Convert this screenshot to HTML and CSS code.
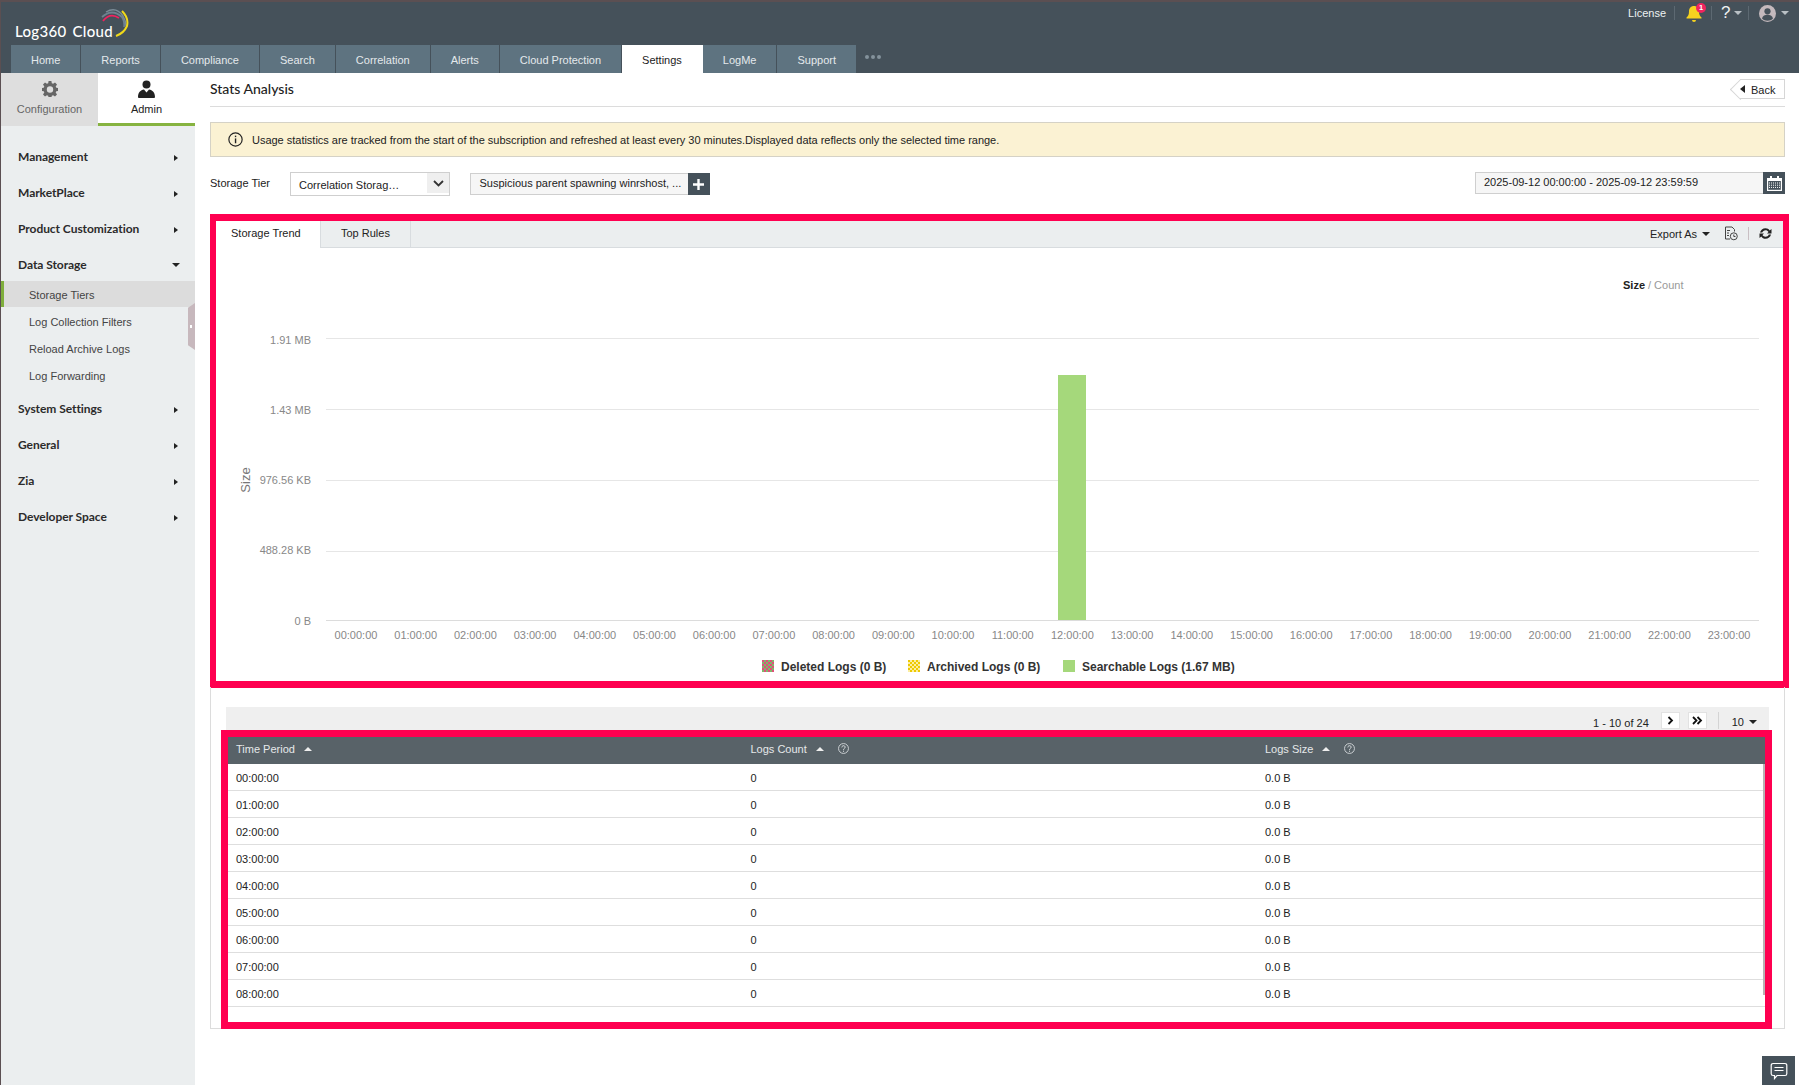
FILE: index.html
```html
<!DOCTYPE html>
<html lang="en">
<head>
<meta charset="utf-8">
<title>Stats Analysis</title>
<link rel="stylesheet" href="styles.css">
</head>
<body>
<header class="top">
  <div class="brand-row">
    <div class="brand">
      <span class="brand-name">Log360 Cloud</span>
      <svg class="brand-arc" width="32" height="32" viewBox="98 6 32 32" fill="none">
        <path d="M103 21 Q110 12 119 18" stroke="#f0225f" stroke-width="1.8"/>
        <path d="M102 17 Q112 8 122 17 Q125 22 124 27" stroke="#6f8290" stroke-width="1.8"/>
        <path d="M106 12 Q116 6 123 16 Q126 21 126 26" stroke="#7c8c97" stroke-width="1.4"/>
        <path d="M122 11 Q129 18 127 26 Q124 33 116 36" stroke="#f1d91a" stroke-width="2"/>
      </svg>
    </div>
    <div class="util">
      <a class="util-link">License</a>
      <i class="util-sep util-sep-a"></i>
      <span class="bell">
        <svg width="16" height="17" viewBox="0 0 16 17"><path d="M8 1c3 0 5 2.200 5 5.500 0 3.500 1 4.500 2.500 6v1H.5v-1C2 11 3 10 3 6.500 3 3.200 5 1 8 1z" fill="#f6d21f"/><path d="M6 15h4a2 2 0 0 1-4 0z" fill="#f6d21f"/></svg>
        <b class="badge">1</b>
      </span>
      <i class="util-sep"></i>
      <span class="help">?</span><i class="caret caret-util"></i>
      <i class="util-sep util-sep-b"></i>
      <svg class="avatar" width="17" height="17" viewBox="0 0 17 17"><circle cx="8.500" cy="8.500" r="8.500" fill="#c4b9bd"/><circle cx="8.500" cy="6.300" r="3.100" fill="#45515a"/><path d="M3 13.500c.6-2.800 3-3.700 5.500-3.700s4.900.9 5.500 3.700c-1.400 1.500-3.300 2.200-5.500 2.200S4.400 15 3 13.500z" fill="#45515a"/></svg>
      <i class="caret caret-util caret-last"></i>
    </div>
  </div>
  <nav class="tabs">
    <a class="tab">Home</a><a class="tab">Reports</a><a class="tab">Compliance</a><a class="tab">Search</a><a class="tab">Correlation</a><a class="tab">Alerts</a><a class="tab">Cloud Protection</a><a class="tab tab-on">Settings</a><a class="tab">LogMe</a><a class="tab">Support</a>
    <span class="more"><i></i><i></i><i></i></span>
  </nav>
</header>

<div class="shell">
  <aside class="side">
    <div class="side-tabs">
      <div class="side-tab">
        <svg width="16" height="16" viewBox="0 0 16 16"><path fill="#666" fill-rule="evenodd" d="M6.600 0h2.800l.4 2.200 1.300.6L13 1.500l2 2-1.300 1.900.6 1.300 2.200.4v2.800l-2.200.4-.6 1.300 1.300 1.900-2 2-1.900-1.300-1.300.6-.4 2.200H6.600l-.4-2.200-1.300-.6L3 15.500l-2-2 1.300-1.900-.6-1.300L-.5 9.900V7.100l2.200-.4.600-1.300L1 3.500l2-2 1.900 1.300 1.300-.6zM8 5.300a3.200 3.200 0 1 0 0 6.400 3.200 3.200 0 0 0 0-6.400z"/></svg>
        <span>Configuration</span>
      </div>
      <div class="side-tab side-tab-on">
        <svg width="17" height="18" viewBox="0 0 17 18"><circle cx="8.500" cy="4.500" r="4" fill="#222"/><path d="M0 17c0-4.500 2.500-7 6-7.500l2.500 3 2.500-3c3.500.5 6 3 6 7.500 0 .5-.5 1-1 1H1c-.5 0-1-.5-1-1z" fill="#222"/></svg>
        <span>Admin</span>
      </div>
    </div>
    <ul class="menu">
      <li class="menu-item">Management<i class="arr"></i></li>
      <li class="menu-item">MarketPlace<i class="arr"></i></li>
      <li class="menu-item">Product Customization<i class="arr"></i></li>
      <li class="menu-item">Data Storage<i class="arr-down"></i></li>
      <li class="sub">
        <a class="sub-item sub-on">Storage Tiers</a>
        <a class="sub-item">Log Collection Filters</a>
        <a class="sub-item">Reload Archive Logs</a>
        <a class="sub-item">Log Forwarding</a>
      </li>
      <li class="menu-item">System Settings<i class="arr"></i></li>
      <li class="menu-item">General<i class="arr"></i></li>
      <li class="menu-item">Zia<i class="arr"></i></li>
      <li class="menu-item">Developer Space<i class="arr"></i></li>
    </ul>
    <span class="collapse"><i></i></span>
  </aside>

  <main class="main">
    <div class="title-row">
      <h1 class="title">Stats Analysis</h1>
      <a class="back"><i class="back-arrow"></i>Back</a>
    </div>

    <div class="notice">
      <svg width="15" height="15" viewBox="0 0 14 14" fill="none"><circle cx="7" cy="7" r="6.200" stroke="#222" stroke-width="1.100"/><rect x="6.400" y="6" width="1.300" height="4.500" fill="#222"/><rect x="6.400" y="3.400" width="1.300" height="1.400" fill="#222"/></svg>
      <span class="notice-text">Usage statistics are tracked from the start of the subscription and refreshed at least every 30 minutes.Displayed data reflects only the selected time range.</span>
    </div>

    <div class="filters">
      <label class="filter-label">Storage Tier</label>
      <div class="select">
        <span class="select-text">Correlation Storag…</span>
        <span class="select-btn"><svg width="11" height="7" viewBox="0 0 11 7" fill="none"><path d="M1 1l4.500 4.500L10 1" stroke="#333" stroke-width="1.800"/></svg></span>
      </div>
      <div class="multi">
        <span class="multi-text">Suspicious parent spawning winrshost, ...</span>
        <span class="multi-btn"><svg width="11" height="11" viewBox="0 0 11 11"><path d="M4.300 0h2.400v4.300H11v2.400H6.700V11H4.300V6.700H0V4.300h4.300z" fill="#fff"/></svg></span>
      </div>
      <div class="date">
        <span class="date-text">2025-09-12 00:00:00 - 2025-09-12 23:59:59</span>
        <span class="date-btn"><svg width="15" height="15" viewBox="0 0 15 15"><path fill="#fff" d="M3 0h2v2h5V0h2v2h3v13H0V2h3z"/><rect x="1.200" y="5" width="12.600" height="8.800" fill="#45515a"/><path stroke="#fff" stroke-dasharray="1 1" d="M2 7h11M2 9.200h11M2 11.400h11"/></svg></span>
      </div>
    </div>

    <section class="chart-frame">
      <div class="chart-tabs">
        <a class="ctab ctab-on">Storage Trend</a>
        <a class="ctab">Top Rules</a>
        <div class="chart-tools">
          <span class="export">Export As<i class="caret caret-dark"></i></span>
          <svg width="14" height="15" viewBox="0 0 14 14" fill="none" stroke="#444"><path d="M6 12.500H1.500v-12H8l2.500 2.500v2"/><path d="M3 4h3M3 6.500h2M3 9h2"/><circle cx="9.800" cy="9.800" r="3.500"/><path d="M9.800 8v2h1.700"/></svg>
          <i class="tool-sep"></i>
          <svg width="13" height="13" viewBox="0 0 13 13"><path fill="#222" d="M6.500 1.200c1.800 0 3.300.9 4.200 2.300L12.500 2v4.500H8l1.500-1.600c-.6-1-1.700-1.600-3-1.600-1.500 0-2.800 1-3.300 2.300H1C1.500 3.200 3.800 1.200 6.500 1.200zM.5 11V6.500H5L3.500 8.100c.6 1 1.700 1.600 3 1.600 1.500 0 2.800-1 3.300-2.300H12c-.5 2.400-2.800 4.400-5.500 4.400-1.800 0-3.300-.9-4.200-2.300z"/></svg>
        </div>
      </div>
      <svg class="chart" viewBox="216 248 1567 433" width="1567" height="433">
        <defs>
          <pattern id="pat-del" width="4" height="4" patternUnits="userSpaceOnUse"><rect width="4" height="4" fill="#e0507a"/><rect width="2" height="2" fill="#7fb86a"/><rect x="2" y="2" width="2" height="2" fill="#7fb86a"/></pattern>
          <pattern id="pat-arc" width="4" height="4" patternUnits="userSpaceOnUse"><rect width="4" height="4" fill="#fbeea0"/><rect width="2" height="2" fill="#eec900"/><rect x="2" y="2" width="2" height="2" fill="#eec900"/></pattern>
        </defs>
        <text class="switch-on" x="1623" y="289">Size</text>
        <text class="switch" x="1648" y="289">/ Count</text>
        <g class="grid">
          <line x1="326" x2="1759" y1="338.500" y2="338.500"/>
          <line x1="326" x2="1759" y1="409.500" y2="409.500"/>
          <line x1="326" x2="1759" y1="480.500" y2="480.500"/>
          <line x1="326" x2="1759" y1="551.500" y2="551.500"/>
        </g>
        <line class="axis" x1="326" x2="1759" y1="620.500" y2="620.500"/>
        <g class="ylab">
          <text x="311" y="344">1.91 MB</text>
          <text x="311" y="414">1.43 MB</text>
          <text x="311" y="484">976.56 KB</text>
          <text x="311" y="554">488.28 KB</text>
          <text x="311" y="625">0 B</text>
        </g>
        <text class="ytitle" transform="translate(250 480) rotate(-90)">Size</text>
        <rect class="bar" x="1058" y="375" width="28" height="245"/>
        <g class="xlab">
          <text x="356" y="639">00:00:00</text><text x="415.700" y="639">01:00:00</text><text x="475.400" y="639">02:00:00</text><text x="535.100" y="639">03:00:00</text><text x="594.800" y="639">04:00:00</text><text x="654.500" y="639">05:00:00</text><text x="714.200" y="639">06:00:00</text><text x="773.900" y="639">07:00:00</text><text x="833.600" y="639">08:00:00</text><text x="893.300" y="639">09:00:00</text><text x="953" y="639">10:00:00</text><text x="1012.700" y="639">11:00:00</text><text x="1072.400" y="639">12:00:00</text><text x="1132.100" y="639">13:00:00</text><text x="1191.800" y="639">14:00:00</text><text x="1251.500" y="639">15:00:00</text><text x="1311.200" y="639">16:00:00</text><text x="1370.900" y="639">17:00:00</text><text x="1430.600" y="639">18:00:00</text><text x="1490.300" y="639">19:00:00</text><text x="1550" y="639">20:00:00</text><text x="1609.700" y="639">21:00:00</text><text x="1669.400" y="639">22:00:00</text><text x="1729.100" y="639">23:00:00</text>
        </g>
        <g class="legend">
          <rect x="762" y="660" width="12" height="12" fill="url(#pat-del)"/><text x="781" y="671">Deleted Logs (0 B)</text>
          <rect x="908" y="660" width="12" height="12" fill="url(#pat-arc)"/><text x="927" y="671">Archived Logs (0 B)</text>
          <rect x="1063" y="660" width="12" height="12" fill="#a5d87b"/><text x="1082" y="671">Searchable Logs (1.67 MB)</text>
        </g>
      </svg>
    </section>

    <section class="table-panel">
      <div class="pager">
        <span class="pager-text">1 - 10 of 24</span>
        <a class="page-btn"><svg width="7" height="9" viewBox="0 0 7 9" fill="none"><path d="M1.500 1l3.500 3.500L1.500 8" stroke="#111" stroke-width="1.800"/></svg></a>
        <a class="page-btn"><svg width="11" height="9" viewBox="0 0 11 9" fill="none"><path d="M1 1l3.500 3.500L1 8M5.500 1L9 4.500 5.500 8" stroke="#111" stroke-width="1.800"/></svg></a>
        <i class="pager-sep"></i>
        <span class="pager-size">10<i class="caret caret-dark"></i></span>
      </div>
      <div class="table-frame">
        <div class="row row-head">
          <div class="cell">Time Period<i class="sort"></i></div>
          <div class="cell">Logs Count<i class="sort"></i><svg class="q" width="11" height="11" viewBox="0 0 10 10" fill="none"><circle cx="5" cy="5" r="4.500" stroke="#d8dcde" stroke-width=".8"/><path d="M3.500 4c0-2 3-2 3-.2 0 1.200-1.500 1-1.500 2.400M5 7v1" stroke="#d8dcde" stroke-width=".9"/></svg></div>
          <div class="cell">Logs Size<i class="sort"></i><svg class="q" width="11" height="11" viewBox="0 0 10 10" fill="none"><circle cx="5" cy="5" r="4.500" stroke="#d8dcde" stroke-width=".8"/><path d="M3.500 4c0-2 3-2 3-.2 0 1.200-1.500 1-1.500 2.400M5 7v1" stroke="#d8dcde" stroke-width=".9"/></svg></div>
        </div>
        <div class="row"><div class="cell">00:00:00</div><div class="cell">0</div><div class="cell">0.0 B</div></div>
        <div class="row"><div class="cell">01:00:00</div><div class="cell">0</div><div class="cell">0.0 B</div></div>
        <div class="row"><div class="cell">02:00:00</div><div class="cell">0</div><div class="cell">0.0 B</div></div>
        <div class="row"><div class="cell">03:00:00</div><div class="cell">0</div><div class="cell">0.0 B</div></div>
        <div class="row"><div class="cell">04:00:00</div><div class="cell">0</div><div class="cell">0.0 B</div></div>
        <div class="row"><div class="cell">05:00:00</div><div class="cell">0</div><div class="cell">0.0 B</div></div>
        <div class="row"><div class="cell">06:00:00</div><div class="cell">0</div><div class="cell">0.0 B</div></div>
        <div class="row"><div class="cell">07:00:00</div><div class="cell">0</div><div class="cell">0.0 B</div></div>
        <div class="row"><div class="cell">08:00:00</div><div class="cell">0</div><div class="cell">0.0 B</div></div>
        <span class="scroll-thumb"></span>
      </div>
    </section>
  </main>
</div>

<a class="chat"><svg width="18" height="18" viewBox="0 0 18 18" fill="none" stroke="#fff" stroke-width="1.200"><path d="M3 1.500h12a1.800 1.800 0 0 1 1.800 1.800v8.400a1.800 1.800 0 0 1-1.800 1.800H7l-2.500 3v-3H3a1.800 1.800 0 0 1-1.800-1.800V3.300A1.800 1.800 0 0 1 3 1.500z"/><path d="M4.500 5.500h9M4.500 8.500h9"/></svg></a>
</body>
</html>
```

FILE: styles.css
```css
* { box-sizing: border-box; }
html, body { margin: 0; height: 100%; }
body {
  width: 1799px;
  height: 1085px;
  overflow: hidden;
  position: relative;
  background: #fff;
  color: #222;
  font: 11px "Liberation Sans", Arial, sans-serif;
  display: flex;
  flex-direction: column;
}
a { color: inherit; text-decoration: none; }
i { display: block; font-style: normal; }
ul { list-style: none; margin: 0; padding: 0; }

/* top bar */
.top {
  height: 73px;
  flex: none;
  background: #45515a;
  border-top: 2px solid #5b4f52;
  border-left: 1px solid #5b4f52;
  display: flex;
  flex-direction: column;
}
.brand-row {
  height: 43px;
  flex: none;
  display: flex;
  justify-content: space-between;
  align-items: flex-start;
}
.brand { position: relative; padding: 21px 0 0 14px; }
.brand-name { font: 500 15px/16px Lato, sans-serif; color: #fff; letter-spacing: .3px; word-spacing: 2px; }
.brand-arc { position: absolute; left: 97px; top: 4px; }
.util {
  display: flex;
  align-items: center;
  height: 22px;
  color: #eef1f2;
  padding-right: 10px;
}
.util-sep { width: 1px; height: 14px; background: #5d6972; margin: 0 10px; }
.util-sep-a { margin: 0 11px 0 8px; }
.util-sep-b { margin: 0 10px 0 6px; }
.bell { position: relative; width: 16px; height: 17px; margin-right: -1px; }
.bell svg { display: block; }
.badge {
  position: absolute;
  left: 10px;
  top: -2px;
  width: 10px;
  height: 10px;
  border-radius: 50%;
  background: #f0245f;
  color: #fff;
  font: bold 7.500px/10px "Liberation Sans", sans-serif;
  text-align: center;
}
.help { font: 17px/20px "Liberation Sans", sans-serif; color: #eef1f2; width: 11px; margin-left: -1px; }
.caret {
  width: 0; height: 0;
  border: 4px solid transparent;
  border-top: 4px solid #b9c0c5;
  border-bottom: 0;
}
.caret-util { margin-left: 2px; }
.caret-last { margin-left: 5px; }
.avatar { display: block; }
.tabs {
  height: 28px;
  flex: none;
  display: flex;
  padding-left: 10px;
  align-items: stretch;
}
.tab {
  padding: 0 20px;
  background: #5e7380;
  border-right: 1px solid #45515a;
  color: #e4e9ec;
  line-height: 30px;
}
.tab-on { background: #fff; color: #222; border-right: 1px solid #fff; }
.more { display: flex; gap: 2px; align-items: center; padding-left: 8px; height: 24px; }
.more i { width: 4px; height: 4px; border-radius: 50%; background: #84929b; }

/* shell */
.shell { flex: 1; display: flex; min-height: 0; }
.side {
  width: 195px;
  flex: none;
  background: #ebeeef;
  border-left: 1px solid #5b4f52;
  position: relative;
}
.side-tabs { display: flex; height: 53px; }
.side-tab {
  width: 97px;
  display: flex;
  flex-direction: column;
  align-items: center;
  padding-top: 8px;
  gap: 6px;
  background: #dedede;
  color: #666;
  line-height: 13px;
}
.side-tab-on {
  background: #fff;
  color: #222;
  border-bottom: 3px solid #86b340;
  padding-top: 7px;
  gap: 5px;
}
.menu { padding-top: 12px; }
.menu-item {
  height: 36px;
  display: flex;
  align-items: center;
  justify-content: space-between;
  padding: 0 17px 0 17px;
  font: bold 12px Lato, sans-serif;
  letter-spacing: -.05px;
  color: #2b2b2b;
}
.arr {
  width: 0; height: 0;
  border: 3.500px solid transparent;
  border-left: 4px solid #222;
  border-right: 0;
  margin-top: 4px;
}
.arr-down {
  width: 0; height: 0;
  border: 4px solid transparent;
  border-top: 4px solid #222;
  border-bottom: 0;
  margin: 2px -2px 0 0;
}
.sub { margin: -1px 0 1px; }
.sub-item {
  display: block;
  height: 27px;
  line-height: 29px;
  padding-left: 28px;
  color: #444;
}
.sub-on { background: #dcdcdc; border-left: 3px solid #7fae3c; padding-left: 25px; height: 26px; margin-bottom: 1px; }
.collapse {
  position: absolute;
  right: 0;
  top: 230px;
  width: 7px;
  height: 47px;
  background: #c7b8bd;
  clip-path: polygon(100% 0, 100% 100%, 0 90%, 0 10%);
}
.collapse i { width: 2px; height: 3px; background: #fff; margin: 22px 0 0 2px; }

/* main */
.main { flex: 1; min-width: 0; padding: 0 14px 0 15px; display: flex; flex-direction: column; }
.title-row {
  height: 34px;
  flex: none;
  display: flex;
  justify-content: space-between;
  align-items: flex-start;
  border-bottom: 1px solid #dcdcdc;
  padding-top: 6px;
}
.title { margin: 0; font: 500 14px/20px Lato, sans-serif; color: #222; }
.back {
  position: relative;
  width: 45px;
  height: 20px;
  border: 1px solid #d6d6d6;
  border-left: 0;
  line-height: 20px;
  padding-left: 11px;
  display: block;
  color: #222;
}
.back::before {
  content: "";
  position: absolute;
  left: -7px;
  top: 2px;
  width: 14px;
  height: 14px;
  border-left: 1px solid #d6d6d6;
  border-bottom: 1px solid #d6d6d6;
  transform: rotate(45deg);
}
.back-arrow {
  position: absolute;
  left: 0;
  top: 5px;
  width: 0; height: 0;
  border: 4px solid transparent;
  border-right: 5px solid #222;
  border-left: 0;
}
.notice {
  height: 35px;
  flex: none;
  margin-top: 15px;
  background: #fbf2d3;
  border: 1px solid #d5d2c6;
  display: flex;
  align-items: center;
  gap: 9px;
  padding-left: 17px;
  color: #222;
}
.notice-text { letter-spacing: -.015px; }
.filters {
  height: 24px;
  flex: none;
  margin-top: 15px;
  display: flex;
  align-items: flex-start;
}
.filter-label { width: 80px; line-height: 22px; color: #222; }
.select {
  width: 160px;
  height: 24px;
  border: 1px solid #cfcfcf;
  display: flex;
  background: #fff;
}
.select-text { flex: 1; line-height: 24px; padding-left: 8px; color: #222; }
.select-btn { width: 22px; height: 20px; background: #efefef; display: flex; align-items: center; justify-content: center; }
.multi { display: flex; margin: 1px 0 0 20px; height: 22px; }
.multi-text {
  width: 218px;
  background: #f6f6f6;
  border: 1px solid #cfcfcf;
  border-right: 0;
  padding-left: 8.500px;
  line-height: 19px;
  color: #222;
}
.multi-btn { width: 22px; background: #45515a; display: flex; align-items: center; justify-content: center; padding-right: 1px; }
.date { display: flex; margin-left: auto; height: 22px; }
.date-text {
  width: 288px;
  background: #f6f6f6;
  border: 1px solid #cfcfcf;
  border-right: 0;
  padding-left: 8px;
  line-height: 19px;
  color: #222;
}
.date-btn { width: 22px; background: #45515a; display: flex; align-items: center; justify-content: center; }

/* chart frame */
.chart-frame {
  flex: none;
  height: 474px;
  margin: 18px -4px 0 0;
  border: solid #ff0050;
  border-width: 7px 6px;
  background: #fff;
  display: flex;
  flex-direction: column;
}
.chart-tabs {
  height: 27px;
  flex: none;
  background: #ebeeef;
  border-bottom: 1px solid #d8dcdf;
  display: flex;
  align-items: stretch;
}
.ctab {
  padding: 0 20px;
  line-height: 25px;
  border-right: 1px solid #d8dcdf;
  color: #222;
}
.ctab-on {
  width: 105px;
  padding: 0 0 0 15px;
  background: #fff;
  height: 27px;
}
.chart-tools {
  margin-left: auto;
  display: flex;
  align-items: center;
  padding: 0 11px 1px 0;
  color: #222;
}
.export { display: flex; align-items: center; gap: 5px; margin-right: 14px; }
.caret-dark { border-top-color: #222; }
.tool-sep { width: 1px; height: 13px; background: #c9bfc3; margin: 0 10px 0 10px; }
.chart { display: block; flex: none; }
.chart text { font-family: "Liberation Sans", sans-serif; font-size: 11px; }
.switch-on { font-weight: bold; fill: #222; }
.switch { fill: #999; }
.grid line { stroke: #e6e6e6; }
.axis { stroke: #dcdcdc; }
.ylab text { fill: #888; text-anchor: end; }
.chart .ytitle { fill: #777; text-anchor: middle; font-size: 13px; }
.xlab text { fill: #888; text-anchor: middle; }
.bar { fill: #a5d87b; }
.chart .legend text { font-size: 12px; font-weight: bold; fill: #333; }

/* table */
.table-panel {
  flex: none;
  height: 342px;
  margin-top: -1px;
  border: 1px solid #dcdcdc;
  border-top: 0;
  padding-top: 20px;
  display: flex;
  flex-direction: column;
}
.pager {
  height: 23px;
  flex: none;
  margin: 0 15px;
  padding: 3px 12px 0 0;
  background: #efefef;
  display: flex;
  align-items: center;
  justify-content: flex-end;
  color: #222;
}
.pager-text { margin: 5px 12px 0 0; }
.page-btn {
  width: 19px;
  height: 17px;
  margin-right: 8px;
  background: #fff;
  border: 1px solid #e2e2e2;
  display: flex;
  align-items: center;
  justify-content: center;
}
.pager-sep { width: 1px; height: 17px; background: #d4d4d4; margin: 0 13px 0 3px; }
.pager-size { display: flex; align-items: center; gap: 5px; margin-top: 3px; }
.table-frame {
  position: relative;
  flex: none;
  height: 299px;
  margin: 0 12px -1px 10px;
  border: 7px solid #ff0050;
  background: #fff;
}
.row {
  display: grid;
  grid-template-columns: 514.500px 514.500px 1fr;
  height: 27px;
  border-bottom: 1px solid #dedede;
  align-items: center;
  padding-top: 2px;
  color: #222;
}
.row-head { background: #586268; color: #e6e9ea; border-bottom: 0; padding: 0 0 4px; }
.cell { padding-left: 8px; display: flex; align-items: center; }
.sort {
  width: 0; height: 0;
  margin-left: 9px;
  border: 4px solid transparent;
  border-bottom: 4px solid #eee;
  border-top: 0;
}
.q { margin-left: 14px; }
.scroll-thumb {
  position: absolute;
  right: 0;
  top: 27px;
  width: 2px;
  height: 231px;
  background: #b9b1b4;
}

.chat {
  position: absolute;
  right: 4px;
  bottom: 0;
  width: 33px;
  height: 29px;
  background: #45515a;
  display: flex;
  align-items: center;
  justify-content: center;
}
```
